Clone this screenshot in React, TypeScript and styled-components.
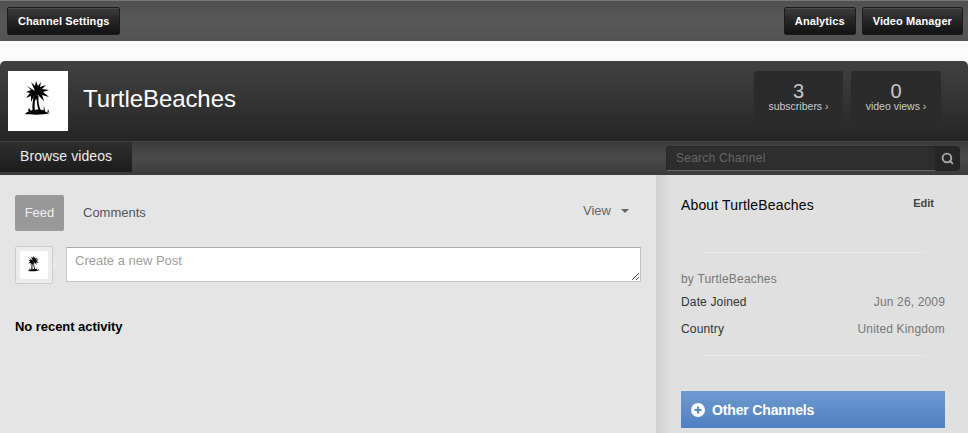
import * as React from 'react';
import styled, { createGlobalStyle } from 'styled-components';
import { Search } from 'lucide-react';

const GlobalStyle = createGlobalStyle`
  html, body {
    margin: 0;
    padding: 0;
    height: 433px;
    overflow: hidden;
    background: #fbfbfb;
    font-family: "Liberation Sans", Arial, sans-serif;
  }
`;

function Palm({ size }: { size: number }) {
  return (
    <svg width={size} height={size} viewBox="0 0 60 60">
      <g fill="#000">
        <path d="M27 20 L23 11 L27 15 L28 10 L30 15 L33 11 L32 16 L38 14 L34 18 L41 19 L35 21 L41 26 L34 24 L36 30 L30 24 L28 30 L26 25 L23 31 L23 25 L18 27 L22 22 L18 21 L23 19 L19 15 Z" />
        <path d="M26 23 L28 23 C27 29 26 34 27 40 L24.5 40 C24 34 25 28 26 23 Z" />
        <path d="M29 25 L30.5 25 C30 31 31 35 33 40 L31 40 C29 35 28.5 30 29 25 Z" />
        <path d="M17 43 C20 40 23 39 27 39 C32 38 36 39 38 41 L42 42 C36 44 25 44 17 43 Z" />
        <path d="M36 35 L37 40 L35.5 40 Z M21 37 L23 40 L20 40 Z M40 38 L41 41 L39.5 41 Z" />
      </g>
    </svg>
  );
}

export default function App() {
  return (
    <>
      <GlobalStyle />
      <TopBar>
        <DarkButton>Channel Settings</DarkButton>
        <TopRight>
          <DarkButton>Analytics</DarkButton>
          <DarkButton>Video Manager</DarkButton>
        </TopRight>
      </TopBar>
      <Channel>
        <Banner>
          <Avatar>
            <Palm size={60} />
          </Avatar>
          <ChannelName>TurtleBeaches</ChannelName>
          <Stats>
            <Stat>
              <StatValue>3</StatValue>
              <StatLabel>subscribers ›</StatLabel>
            </Stat>
            <Stat $wide>
              <StatValue>0</StatValue>
              <StatLabel>video views ›</StatLabel>
            </Stat>
          </Stats>
        </Banner>
        <TabBar>
          <BrowseTab>Browse videos</BrowseTab>
          <SearchBox>
            <SearchInput>Search Channel</SearchInput>
            <SearchButton>
              <Search size={13} strokeWidth={3.5} color="#a8a8a8" />
            </SearchButton>
          </SearchBox>
        </TabBar>
        <Content>
          <Main>
            <FeedTabs>
              <FeedTab $active>Feed</FeedTab>
              <FeedTab>Comments</FeedTab>
              <ViewMenu>
                View
                <Caret />
              </ViewMenu>
            </FeedTabs>
            <PostRow>
              <SmallAvatar>
                <SmallAvatarInner>
                  <Palm size={28} />
                </SmallAvatarInner>
              </SmallAvatar>
              <PostBox>
                Create a new Post
                <Grip width="9" height="9" viewBox="0 0 9 9">
                  <path d="M1 8 L8 1 M5 8 L8 5" stroke="#555" strokeWidth="1" />
                </Grip>
              </PostBox>
            </PostRow>
            <Divider />
            <NoActivity>No recent activity</NoActivity>
          </Main>
          <Side>
            <AboutHead>
              <AboutTitle>About TurtleBeaches</AboutTitle>
              <EditLink>Edit</EditLink>
            </AboutHead>
            <Divider />
            <ByLine>by TurtleBeaches</ByLine>
            <InfoRow>
              <InfoKey>Date Joined</InfoKey>
              <InfoValue>Jun 26, 2009</InfoValue>
            </InfoRow>
            <InfoRow>
              <InfoKey>Country</InfoKey>
              <InfoValue>United Kingdom</InfoValue>
            </InfoRow>
            <SideDivider />
            <OtherChannels>
              <svg width="14" height="14" viewBox="0 0 14 14">
                <circle cx="7" cy="7" r="7" fill="#fff" />
                <path d="M7 3.5 V10.5 M3.5 7 H10.5" stroke="#5f8cc8" strokeWidth="2.2" />
              </svg>
              Other Channels
            </OtherChannels>
          </Side>
        </Content>
      </Channel>
    </>
  );
}

const TopBar = styled.div`
  display: flex;
  justify-content: space-between;
  align-items: flex-start;
  box-sizing: border-box;
  height: 41px;
  padding: 6px 5px 0 7px;
  background: linear-gradient(#505050, #585858 50%, #525252);
  border-top: 1px solid #777;
  margin-bottom: 20px;
`;

const TopRight = styled.div`
  display: flex;
  gap: 6px;
`;

const DarkButton = styled.div`
  box-sizing: border-box;
  height: 28px;
  padding: 0 10px;
  line-height: 26px;
  font-size: 11px;
  font-weight: bold;
  letter-spacing: 0.1px;
  color: #fff;
  border: 1px solid #1c1c1c;
  border-radius: 2px;
  background: linear-gradient(#3a3a3a, #121212);
  box-shadow: inset 0 1px 0 #4a4a4a;
`;

const Channel = styled.div`
  border-radius: 5px 5px 0 0;
  overflow: hidden;
`;

const Banner = styled.div`
  display: flex;
  align-items: flex-start;
  box-sizing: border-box;
  height: 80px;
  padding: 10px 27px 0 8px;
  background: linear-gradient(#414141, #262626);
`;

const Avatar = styled.div`
  width: 60px;
  height: 60px;
  background: #fff;
`;

const ChannelName = styled.h1`
  margin: 0 0 0 15px;
  font-size: 24px;
  line-height: 56px;
  font-weight: normal;
  letter-spacing: -0.08px;
  color: #fff;
`;

const Stats = styled.div`
  display: flex;
  gap: 8px;
  margin-left: auto;
`;

const Stat = styled.div<{ $wide?: boolean }>`
  box-sizing: border-box;
  width: ${p => (p.$wide ? 90 : 89)}px;
  height: 52px;
  padding-top: 10px;
  text-align: center;
  background: #2b2b2b;
  border-radius: 2px;
`;

const StatValue = styled.div`
  font-size: 20px;
  line-height: 20px;
  color: #c8c8c8;
`;

const StatLabel = styled.div`
  font-size: 10.5px;
  line-height: 11px;
  color: #c9c9c9;
`;

const TabBar = styled.div`
  display: flex;
  justify-content: space-between;
  align-items: flex-start;
  box-sizing: border-box;
  height: 34px;
  padding-right: 8px;
  background: linear-gradient(#3c3c3c, #4a4a4a 50%, #3b3b3b);
  border-top: 1px solid #474747;
`;

const BrowseTab = styled.div`
  box-sizing: border-box;
  width: 132px;
  height: 31px;
  margin-top: -1px;
  padding-left: 20px;
  line-height: 28px;
  font-size: 14px;
  letter-spacing: 0.08px;
  color: #eee;
  background: linear-gradient(#2f2f2f, #1c1c1c);
  border-top: 1px solid #404040;
`;

const SearchBox = styled.div`
  display: flex;
  margin-top: 4px;
  height: 25px;
`;

const SearchInput = styled.div`
  box-sizing: border-box;
  width: 270px;
  padding-left: 9px;
  line-height: 23px;
  font-size: 12px;
  letter-spacing: 0.25px;
  color: #666;
  background: #2d2d2d;
  border: 1px solid #262626;
  border-bottom-color: #666;
  border-radius: 3px 0 0 3px;
`;

const SearchButton = styled.div`
  display: flex;
  align-items: center;
  justify-content: center;
  box-sizing: border-box;
  width: 24px;
  padding: 0 2px 1px 0;
  background: #262626;
  border-radius: 0 4px 4px 0;
`;

const Content = styled.div`
  display: flex;
  height: 258px;
`;

const Main = styled.div`
  box-sizing: border-box;
  width: 656px;
  padding: 20px 15px 0;
  background: #e5e5e5;
`;

const FeedTabs = styled.div`
  display: flex;
  align-items: center;
  gap: 4px;
  height: 36px;
`;

const FeedTab = styled.div<{ $active?: boolean }>`
  box-sizing: border-box;
  width: ${p => (p.$active ? '49px' : 'auto')};
  height: 36px;
  padding: 0 ${p => (p.$active ? 0 : 15)}px;
  line-height: 35px;
  text-align: center;
  font-size: 13px;
  color: ${p => (p.$active ? '#eee' : '#555')};
  background: ${p => (p.$active ? '#999' : 'transparent')};
  border-radius: 2px;
`;

const ViewMenu = styled.div`
  display: flex;
  align-items: center;
  gap: 10px;
  margin: -5px 0 0 auto;
  padding-right: 12px;
  font-size: 13px;
  color: #666;
`;

const Caret = styled.span`
  width: 0;
  height: 0;
  border-left: 4px solid transparent;
  border-right: 4px solid transparent;
  border-top: 4px solid #666;
`;

const PostRow = styled.div`
  display: flex;
  align-items: flex-start;
  gap: 13px;
  margin-top: 15px;
  margin-bottom: 25px;
`;

const SmallAvatar = styled.div`
  position: relative;
  display: flex;
  align-items: center;
  justify-content: center;
  box-sizing: border-box;
  width: 38px;
  height: 38px;
  border: 1px solid #ccc;
  border-radius: 2px;
  background: #ececec;

  &::after {
    content: '';
    position: absolute;
    right: -5px;
    top: 14px;
    border-left: 4px solid #ececec;
    border-top: 4px solid transparent;
    border-bottom: 4px solid transparent;
  }
`;

const SmallAvatarInner = styled.div`
  width: 28px;
  height: 28px;
  background: #fff;
  border-radius: 2px;
`;

const PostBox = styled.div`
  position: relative;
  flex: 1;
  box-sizing: border-box;
  height: 35px;
  margin-top: 1px;
  padding: 5px 8px;
  font-size: 13px;
  line-height: 16px;
  color: #a0a0a0;
  background: #fff;
  border: 1px solid #c4c4c4;
  border-top-color: #aaa;
`;

const Grip = styled.svg`
  position: absolute;
  right: 0;
  bottom: 0;
`;

const Divider = styled.div`
  height: 1px;
  margin: 0 20px;
  background: #e9e9e9;
`;

const NoActivity = styled.div`
  margin-top: 9px;
  font-size: 13px;
  font-weight: bold;
  line-height: 15px;
  letter-spacing: -0.05px;
  color: #000;
`;

const Side = styled.div`
  box-sizing: border-box;
  width: 312px;
  padding: 0 23px 0 25px;
  background: linear-gradient(90deg, #cfcfcf, #e0e0e0 14px);
`;

const AboutHead = styled.div`
  display: flex;
  justify-content: space-between;
  height: 77px;
  padding: 22px 11px 0 0;
  box-sizing: border-box;
`;

const AboutTitle = styled.div`
  font-size: 14px;
  line-height: 16px;
  letter-spacing: 0.15px;
  color: #000;
`;

const EditLink = styled.div`
  font-size: 11px;
  font-weight: bold;
  line-height: 12px;
  color: #444;
`;

const ByLine = styled.div`
  margin-top: 19px;
  margin-bottom: 8px;
  font-size: 12px;
  line-height: 14px;
  letter-spacing: 0.2px;
  color: #777;
`;

const InfoRow = styled.div`
  display: flex;
  justify-content: space-between;
  height: 27px;
  font-size: 12px;
  line-height: 16px;
  letter-spacing: 0.15px;
`;

const InfoKey = styled.span`
  color: #333;
`;

const InfoValue = styled.span`
  color: #777;
`;

const SideDivider = styled(Divider)`
  margin-top: 7px;
`;

const OtherChannels = styled.div`
  display: flex;
  align-items: center;
  gap: 7px;
  box-sizing: border-box;
  height: 37px;
  margin-top: 35px;
  padding-left: 10px;
  font-size: 14px;
  font-weight: bold;
  letter-spacing: -0.15px;
  color: #fff;
  background: linear-gradient(#6f9ad0, #4f80c2);
`;
